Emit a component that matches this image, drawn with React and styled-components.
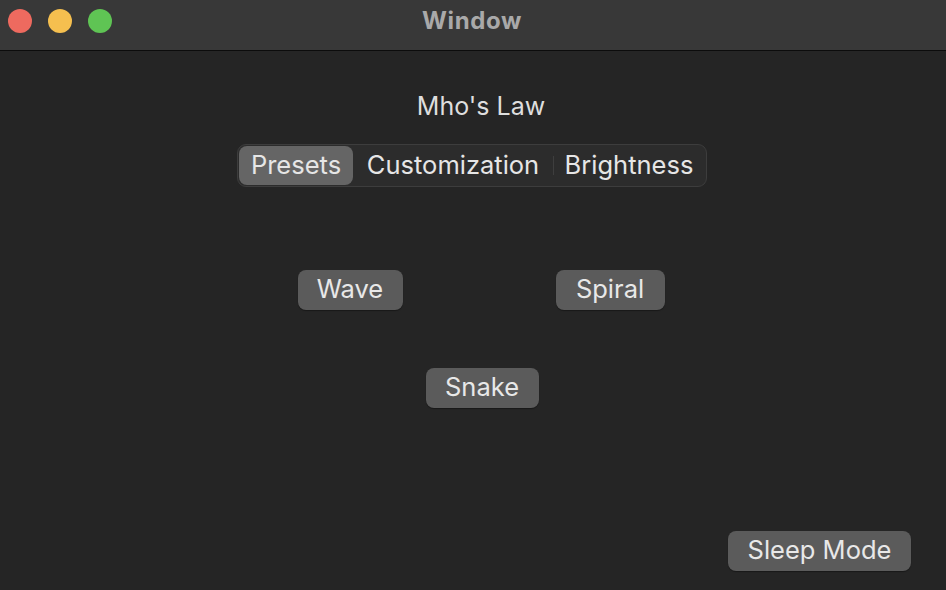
import React from "react";
import styled, { createGlobalStyle } from "styled-components";

const GlobalStyle = createGlobalStyle`
  html, body {
    margin: 0;
    padding: 0;
    background: #252525;
  }
  * {
    box-sizing: border-box;
  }
`;

const Window = styled.div`
  width: 946px;
  height: 590px;
  display: flex;
  flex-direction: column;
  background: #252525;
  font-family: Inter, "Open Sans", sans-serif;
  overflow: hidden;
`;

const TitleBar = styled.div`
  position: relative;
  height: 51px;
  flex-shrink: 0;
  display: flex;
  align-items: center;
  justify-content: center;
  background: #383838;
  border-bottom: 1px solid #0c0c0c;
`;

const Lights = styled.div`
  position: absolute;
  left: 8px;
  top: 9px;
  display: flex;
  gap: 16px;
`;

const Light = styled.span`
  width: 24px;
  height: 24px;
  border-radius: 50%;
  background: ${p => p.color};
`;

const Title = styled.div`
  margin-top: -9px;
  margin-left: -2px;
  font-size: 24px;
  font-weight: 700;
  color: #a9a9a9;
  letter-spacing: 0.6px;
`;

const Content = styled.div`
  flex: 1;
  display: flex;
  flex-direction: column;
  align-items: center;
  padding-top: 41px;
  padding-left: 16px;
`;

const Heading = styled.div`
  font-size: 25px;
  color: #dedede;
  line-height: 28px;
  margin-bottom: 24px;
`;

const Segmented = styled.div`
  display: flex;
  align-items: center;
  height: 43px;
  padding: 1px;
  border-radius: 9px;
  background: #2c2c2c;
  border: 1px solid #3d3d3d;
  margin-left: -18px;
`;

const Segment = styled.div`
  position: relative;
  height: 39px;
  width: ${p => p.w}px;
  display: flex;
  align-items: center;
  justify-content: center;
  padding-bottom: 2px;
  font-size: 25.5px;
  color: #e6e6e6;
  border-radius: 8px;
  background: ${p => (p.active ? "#656565" : "transparent")};

  ${p =>
    p.divider &&
    `&::before {
      content: "";
      position: absolute;
      left: 0;
      top: 10px;
      bottom: 10px;
      width: 1px;
      background: #3e3e3e;
    }`}
`;

const Row = styled.div`
  display: flex;
  gap: 153px;
  margin-top: 83px;
`;

const Button = styled.div`
  height: 40px;
  width: ${p => p.w}px;
  display: flex;
  align-items: center;
  justify-content: center;
  padding-bottom: 3px;
  background: #5b5b5b;
  border-radius: 8px;
  font-size: 25.5px;
  color: #e8e8e8;
  box-shadow: 0 1px 1px rgba(0, 0, 0, 0.35);
`;

const SnakeRow = styled.div`
  margin-top: 58px;
  margin-left: 2px;
`;

const Footer = styled.div`
  margin-top: auto;
  align-self: flex-end;
  margin-right: 35px;
  margin-bottom: 19px;
`;

export default function App() {
  return (
    <>
      <GlobalStyle />
      <Window>
        <TitleBar>
          <Lights>
            <Light color="#ee6a5f" />
            <Light color="#f5bf4f" />
            <Light color="#5fc454" />
          </Lights>
          <Title>Window</Title>
        </TitleBar>
        <Content>
          <Heading>Mho's Law</Heading>
          <Segmented>
            <Segment w={114} active>
              Presets
            </Segment>
            <Segment w={200}>Customization</Segment>
            <Segment w={152} divider>
              Brightness
            </Segment>
          </Segmented>
          <Row>
            <Button w={105}>Wave</Button>
            <Button w={109}>Spiral</Button>
          </Row>
          <SnakeRow>
            <Button w={113}>Snake</Button>
          </SnakeRow>
          <Footer>
            <Button w={183}>Sleep Mode</Button>
          </Footer>
        </Content>
      </Window>
    </>
  );
}
